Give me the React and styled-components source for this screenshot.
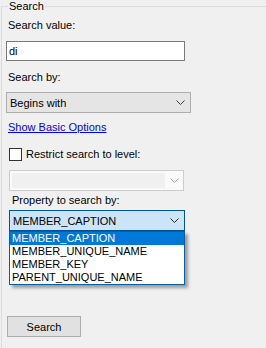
import React from 'react'
import styled, { createGlobalStyle } from 'styled-components'

const GlobalStyle = createGlobalStyle`
  html, body {
    margin: 0;
    padding: 0;
    background: #f0f0f0;
    font-family: 'Liberation Sans', Arial, sans-serif;
    font-size: 11px;
    color: #000;
  }
`

const options = ['MEMBER_CAPTION', 'MEMBER_UNIQUE_NAME', 'MEMBER_KEY', 'PARENT_UNIQUE_NAME']

const Chevron = ({ color }) => (
  <svg width='9' height='5' viewBox='0 0 9 5'>
    <path d='M0.5 0.5 L4.5 4.5 L8.5 0.5' fill='none' stroke={color} strokeWidth='1' />
  </svg>
)

const App = () => {
  return (
    <Page>
      <GlobalStyle />
      <Group>
        <Legend>Search</Legend>
        <Column>
          <Label $top={6} $left={6}>Search value:</Label>
          <TextInput $top={9} $left={4} defaultValue='di' />
          <Label $top={10} $left={6}>Search by:</Label>
          <Combo $top={8} $left={4} $width={185}>
            <span>Begins with</span>
            <Chevron color='#3c3c3c' />
          </Combo>
          <LinkText $top={8} $left={6}>Show Basic Options</LinkText>
          <CheckRow $top={14} $left={7}>
            <Box />
            <span>Restrict search to level:</span>
          </CheckRow>
          <DisabledCombo $top={9} $left={7}>
            <div className='field' />
            <Chevron color='#a6a6a6' />
          </DisabledCombo>
          <Label $top={3} $left={10}>Property to search by:</Label>
          <DropWrap $top={3} $left={7}>
            <ActiveCombo>
              <span>MEMBER_CAPTION</span>
              <Chevron color='#2b2b2b' />
            </ActiveCombo>
            <List>
              {options.map((o, i) => (
                <Item key={o} $selected={i === 0}>{o}</Item>
              ))}
            </List>
          </DropWrap>
          <Button $top={85} $left={5}>Search</Button>
        </Column>
      </Group>
    </Page>
  )
}

const Page = styled.div`
  width: 266px;
  height: 348px;
  overflow: hidden;
`

const Group = styled.fieldset`
  margin: 0 0 0 1px;
  padding: 0;
  min-width: 0;
  height: 360px;
  border: 1px solid #dcdcdc;
  border-right: none;
  border-bottom: none;
`

const Legend = styled.legend`
  margin-left: 6px;
  padding: 0 1px;
  line-height: 13px;
  font-size: 11px;
`

const Column = styled.div`
  display: flex;
  flex-direction: column;
  align-items: flex-start;
`

const Label = styled.div`
  margin: ${(p) => p.$top}px 0 0 ${(p) => p.$left}px;
  line-height: 13px;
`

const TextInput = styled.input`
  margin: ${(p) => p.$top}px 0 0 ${(p) => p.$left}px;
  box-sizing: border-box;
  width: 179px;
  height: 20px;
  border: 1px solid #7a7a7a;
  background: #fff;
  padding: 0 2px;
  font: 11px 'Liberation Sans', Arial, sans-serif;
  color: #000;
  outline: none;
`

const Combo = styled.div`
  margin: ${(p) => p.$top}px 0 0 ${(p) => p.$left}px;
  box-sizing: border-box;
  width: ${(p) => p.$width}px;
  height: 21px;
  display: flex;
  align-items: center;
  justify-content: space-between;
  padding: 0 5px 0 3px;
  background: #e5e5e5;
  border: 1px solid #adadad;
`

const ActiveCombo = styled.div`
  box-sizing: border-box;
  width: 176px;
  height: 21px;
  display: flex;
  align-items: center;
  justify-content: space-between;
  padding: 0 5px 0 3px;
  background: #cce4f7;
  border: 1px solid #005499;
`

const DisabledCombo = styled.div`
  margin: ${(p) => p.$top}px 0 0 ${(p) => p.$left}px;
  box-sizing: border-box;
  width: 175px;
  height: 21px;
  display: flex;
  align-items: center;
  justify-content: space-between;
  padding: 0 4px 0 2px;
  background: #fafafa;
  border: 1px solid #cccccc;

  .field {
    width: 153px;
    height: 15px;
    background: #f0f0f0;
  }
`

const LinkText = styled.div`
  margin: ${(p) => p.$top}px 0 0 ${(p) => p.$left}px;
  line-height: 13px;
  color: #0000ff;
  text-decoration: underline;
  cursor: pointer;
`

const CheckRow = styled.label`
  margin: ${(p) => p.$top}px 0 0 ${(p) => p.$left}px;
  display: flex;
  align-items: center;
  gap: 4px;
  line-height: 13px;
`

const Box = styled.span`
  box-sizing: border-box;
  width: 13px;
  height: 13px;
  border: 1px solid #333;
  background: #fff;
`

const DropWrap = styled.div`
  margin: ${(p) => p.$top}px 0 0 ${(p) => p.$left}px;
  position: relative;
`

const List = styled.div`
  position: absolute;
  top: 21px;
  left: 0;
  box-sizing: border-box;
  width: 176px;
  background: #fff;
  border: 1px solid #0a5ea8;
  box-shadow: 3px 3px 3px rgba(0, 0, 0, 0.35);
  z-index: 2;
`

const Item = styled.div`
  height: 13px;
  line-height: 13px;
  padding-left: 2px;
  background: ${(p) => (p.$selected ? '#0078d7' : '#fff')};
  color: ${(p) => (p.$selected ? '#fff' : '#000')};
`

const Button = styled.button`
  margin: ${(p) => p.$top}px 0 0 ${(p) => p.$left}px;
  box-sizing: border-box;
  width: 74px;
  height: 21px;
  background: #e1e1e1;
  border: 1px solid #adadad;
  font: 11px 'Liberation Sans', Arial, sans-serif;
  color: #000;
  padding: 0;
`

export default App
